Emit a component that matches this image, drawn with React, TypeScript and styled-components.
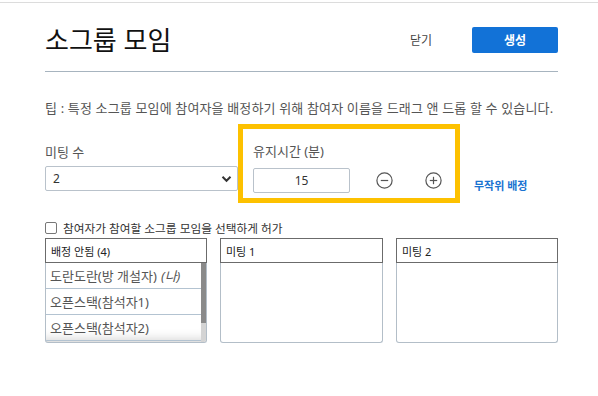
import React, { useState } from 'react'
import styled, { createGlobalStyle } from 'styled-components'

const GlobalStyle = createGlobalStyle`
  body {
    margin: 0;
    background: #fff;
    font-family: 'Noto Sans', 'Noto Sans CJK KR', sans-serif;
    color: #333;
  }
`

const Page = styled.div`
  border-top: 1px solid #dcdcdc;
  margin-top: 2px;
  padding: 24px 40px 0 45px;
  width: 513px;
`

const Header = styled.header`
  display: flex;
  align-items: center;
  height: 26px;
  padding-bottom: 18px;
  border-bottom: 1px solid #a7b4bf;
`

const Title = styled.h1`
  flex: 1;
  margin: 0;
  font-size: 26px;
  line-height: 26px;
  font-weight: 400;
  color: #111;
`

const TextButton = styled.button`
  border: 0;
  background: none;
  font: inherit;
  font-size: 12px;
  color: #444;
  padding: 0;
  margin-right: 40px;
`

const PrimaryButton = styled.button`
  width: 86px;
  height: 26px;
  border: 0;
  border-radius: 2px;
  background: #1272d7;
  color: #fff;
  font: inherit;
  font-size: 12px;
  font-weight: 700;
`

const Tip = styled.p`
  margin: 28px 0 0;
  font-size: 13px;
  line-height: 16px;
  letter-spacing: 0.15px;
  color: #555;
  white-space: nowrap;
`

const FieldRow = styled.div`
  display: flex;
  align-items: flex-end;
  margin-top: 8px;
`

const CountField = styled.div`
  width: 193px;
  margin-bottom: 12px;
`

const Label = styled.div`
  font-size: 13px;
  line-height: 16px;
  color: #555;
`

const SelectBox = styled.div`
  margin-top: 6px;
  height: 25px;
  box-sizing: border-box;
  border: 1px solid #b9c2cb;
  border-radius: 2px;
  display: flex;
  align-items: center;
  padding-left: 7px;
  font-size: 12px;
  color: #333;
`

const Chevron = styled.svg`
  margin-left: auto;
  margin-right: 5px;
`

const Highlight = styled.div`
  width: 222px;
  box-sizing: border-box;
  border: 5px solid #fdc100;
  padding: 14px 0 5px 10px;
`

const DurationRow = styled.div`
  display: flex;
  align-items: center;
  margin-top: 9px;
`

const NumberInput = styled.div`
  width: 97px;
  height: 25px;
  box-sizing: border-box;
  border: 1px solid #b9c2cb;
  border-radius: 2px;
  display: flex;
  align-items: center;
  justify-content: center;
  font-size: 12px;
  color: #333;
`

const IconButton = styled.button<{ $gap: number }>`
  border: 0;
  background: none;
  padding: 0;
  margin-left: ${p => p.$gap}px;
  display: flex;
  color: #555;
`

const LinkButton = styled.button`
  border: 0;
  background: none;
  padding: 0;
  margin: 0 0 9px 14px;
  font: inherit;
  font-size: 11px;
  line-height: 16px;
  font-weight: 700;
  color: #1a73d1;
`

const CheckRow = styled.label`
  display: flex;
  align-items: center;
  gap: 6px;
  margin-top: 19px;
  font-size: 11.7px;
  line-height: 12px;
  color: #333;
`

const CheckBox = styled.span`
  width: 12px;
  height: 12px;
  box-sizing: border-box;
  border: 1px solid #777;
  border-radius: 2px;
`

const Columns = styled.div`
  display: grid;
  grid-template-columns: 162px 163px 162px;
  column-gap: 13px;
  margin-top: 4px;
`

const ColumnHead = styled.div`
  height: 25px;
  box-sizing: border-box;
  border: 1px solid #6b6b6b;
  display: flex;
  align-items: center;
  padding-left: 5px;
  font-size: 11px;
  color: #222;
`

const ColumnBody = styled.div`
  height: 80px;
  box-sizing: border-box;
  border: 1px solid #b3bec8;
  border-top: 0;
  border-radius: 0 0 3px 3px;
  display: flex;
  overflow: hidden;
`

const MemberList = styled.div`
  flex: 1;
  min-width: 0;
  box-shadow: inset 0 -14px 12px -12px rgba(0, 0, 0, 0.2);
`

const ScrollTrack = styled.div`
  width: 5px;
  background: #d4d4d4;
`

const ScrollThumb = styled.div`
  height: 60px;
  background: #8a8a8a;
`

const Member = styled.div`
  height: 26px;
  box-sizing: border-box;
  border-bottom: 1px solid #b3c3d1;
  display: flex;
  align-items: center;
  padding-left: 4px;
  font-size: 13px;
  color: #555;
  white-space: nowrap;
  em { margin-left: 4px; }
`

function CircleIcon ({ plus }: { plus?: boolean }) {
  return (
    <svg width="17" height="17" viewBox="0 0 17 17" fill="none" stroke="currentColor" strokeWidth="1.2">
      <circle cx="8.5" cy="8.5" r="7.6" />
      <path d="M4.8 8.5h7.4" />
      {plus && <path d="M8.5 4.8v7.4" />}
    </svg>
  )
}

const members = [
  { name: '도란도란(방 개설자)', me: true },
  { name: '오픈스택(참석자1)' },
  { name: '오픈스택(참석자2)' },
]

export default function App () {
  const [duration, setDuration] = useState(15)

  return (
    <>
      <GlobalStyle />
      <Page>
        <Header>
          <Title>소그룹 모임</Title>
          <TextButton>닫기</TextButton>
          <PrimaryButton>생성</PrimaryButton>
        </Header>
        <Tip>팁 : 특정 소그룹 모임에 참여자을 배정하기 위해 참여자 이름을 드래그 앤 드롭 할 수 있습니다.</Tip>
        <FieldRow>
          <CountField>
            <Label>미팅 수</Label>
            <SelectBox>
              2
              <Chevron width="11" height="8" viewBox="0 0 11 8">
                <path d="M1.5 1.8l4 4 4-4" fill="none" stroke="#333" strokeWidth="2" />
              </Chevron>
            </SelectBox>
          </CountField>
          <Highlight>
            <Label>유지시간 (분)</Label>
            <DurationRow>
              <NumberInput>{duration}</NumberInput>
              <IconButton $gap={26} onClick={() => setDuration(d => Math.max(1, d - 1))}>
                <CircleIcon />
              </IconButton>
              <IconButton $gap={32} onClick={() => setDuration(d => d + 1)}>
                <CircleIcon plus />
              </IconButton>
            </DurationRow>
          </Highlight>
          <LinkButton>무작위 배정</LinkButton>
        </FieldRow>
        <CheckRow>
          <CheckBox />
          참여자가 참여할 소그룹 모임을 선택하게 허가
        </CheckRow>
        <Columns>
          <div>
            <ColumnHead>배정 안됨 (4)</ColumnHead>
            <ColumnBody>
              <MemberList>
                {members.map(m => (
                  <Member key={m.name}>
                    {m.name}{m.me && <em>(나)</em>}
                  </Member>
                ))}
              </MemberList>
              <ScrollTrack>
                <ScrollThumb />
              </ScrollTrack>
            </ColumnBody>
          </div>
          <div>
            <ColumnHead>미팅 1</ColumnHead>
            <ColumnBody />
          </div>
          <div>
            <ColumnHead>미팅 2</ColumnHead>
            <ColumnBody />
          </div>
        </Columns>
      </Page>
    </>
  )
}
